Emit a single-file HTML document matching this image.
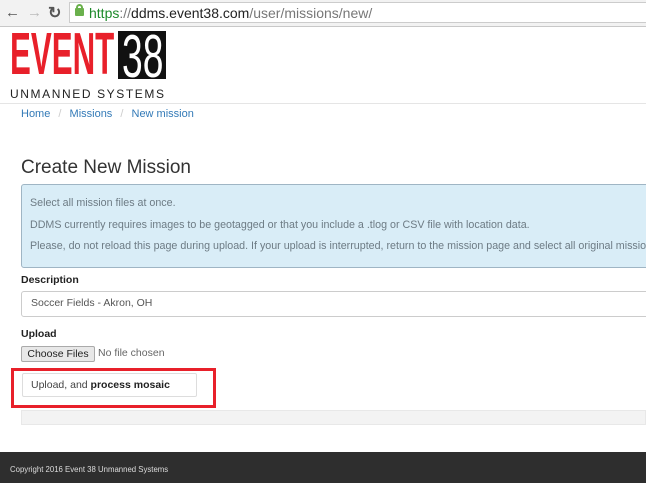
<!DOCTYPE html>
<html><head><style>
*{box-sizing:border-box;margin:0;padding:0}
body{width:646px;height:483px;overflow:hidden;background:#fff;font-family:"Liberation Sans",Arial,sans-serif;position:relative;color:#333}
.abs{position:absolute}
</style></head><body>
<div class="abs" style="left:0;top:0;width:646px;height:27px;background:#f2f2f2;border-bottom:1px solid #c8c8c8"></div>
<div class="abs" style="left:5px;top:4px;font-size:15px;color:#555">&#8592;</div>
<div class="abs" style="left:27px;top:4px;font-size:15px;color:#bbb">&#8594;</div>
<div class="abs" style="left:48px;top:3px;font-size:16px;color:#555;font-weight:bold">&#8635;</div>
<div class="abs" style="left:69px;top:2px;width:577px;height:21px;background:#fff;border:1px solid #ccc;border-right:none"></div>
<div class="abs" style="left:75px;top:8px;width:9px;height:8px;background:#6ab04c;border-radius:1px"></div>
<div class="abs" style="left:76px;top:4px;width:7px;height:6px;border:2px solid #6ab04c;border-bottom:none;border-radius:4px 4px 0 0"></div>
<div class="abs" style="left:89px;top:5px;font-size:14px;color:#777;white-space:nowrap"><span style="color:#1d8a2a">https</span>://<span style="color:#222">ddms.event38.com</span>/user/missions/new/</div>

<div class="abs" style="left:10px;top:25px;font-size:59px;line-height:59px;font-weight:bold;color:#e8202a;transform:scaleX(0.53);transform-origin:left top;white-space:nowrap">EVENT</div>
<div class="abs" style="left:118px;top:31px;width:48px;height:48px;background:#111;overflow:hidden"></div>
<div class="abs" style="left:122px;top:27px;font-size:60px;line-height:60px;color:#fff;transform:scaleX(0.62);transform-origin:left top;white-space:nowrap">38</div>
<div class="abs" style="left:10px;top:87px;font-size:12px;letter-spacing:1.6px;color:#222;white-space:nowrap">UNMANNED SYSTEMS</div>
<div class="abs" style="left:0;top:103px;width:646px;height:1px;background:#e5e5e5"></div>
<div class="abs" style="left:21px;top:108px;font-size:11px;color:#337ab7">Home <span style="color:#ccc;margin:0 5px">/</span> Missions <span style="color:#ccc;margin:0 5px">/</span> New mission</div>

<div class="abs" style="left:21px;top:157px;font-size:19px;color:#333">Create New Mission</div>
<div class="abs" style="left:21px;top:184px;width:640px;height:84px;background:#d9edf7;border:1px solid #9fb5c4;border-radius:3px"></div>
<div class="abs" style="left:30px;top:193px;font-size:10.7px;color:#6d7b84;line-height:21.5px;white-space:nowrap">Select all mission files at once.<br>DDMS currently requires images to be geotagged or that you include a .tlog or CSV file with location data.<br>Please, do not reload this page during upload. If your upload is interrupted, return to the mission page and select all original missio</div>
<div class="abs" style="left:21px;top:274px;font-size:10.5px;font-weight:bold;color:#222">Description</div>
<div class="abs" style="left:21px;top:291px;width:640px;height:26px;border:1px solid #ccc;border-radius:3px"></div>
<div class="abs" style="left:31px;top:297px;font-size:10.5px;color:#555">Soccer Fields - Akron, OH</div>
<div class="abs" style="left:21px;top:328px;font-size:10.5px;font-weight:bold;color:#222">Upload</div>
<div class="abs" style="left:21px;top:346px;width:74px;height:16px;background:#e8e8e8;border:1px solid #aaa;border-radius:2px;font-size:10.5px;line-height:14px;text-align:center;color:#222">Choose Files</div>
<div class="abs" style="left:98px;top:347px;font-size:10.5px;color:#666">No file chosen</div>
<div class="abs" style="left:11px;top:368px;width:205px;height:40px;border:3px solid #e8202a"></div>
<div class="abs" style="left:22px;top:373px;width:175px;height:24px;border:1px solid #ddd;border-radius:2px;background:#fff"></div>
<div class="abs" style="left:31px;top:379px;font-size:10.5px;color:#444">Upload, and <b style="color:#222">process mosaic</b></div>
<div class="abs" style="left:21px;top:410px;width:625px;height:15px;background:#f3f3f3;border:1px solid #e8e8e8"></div>
<div class="abs" style="left:0;top:452px;width:646px;height:31px;background:#2e2e2e"></div>
<div class="abs" style="left:10px;top:465px;font-size:7.8px;color:#ddd">Copyright 2016 Event 38 Unmanned Systems</div>
</body></html>
